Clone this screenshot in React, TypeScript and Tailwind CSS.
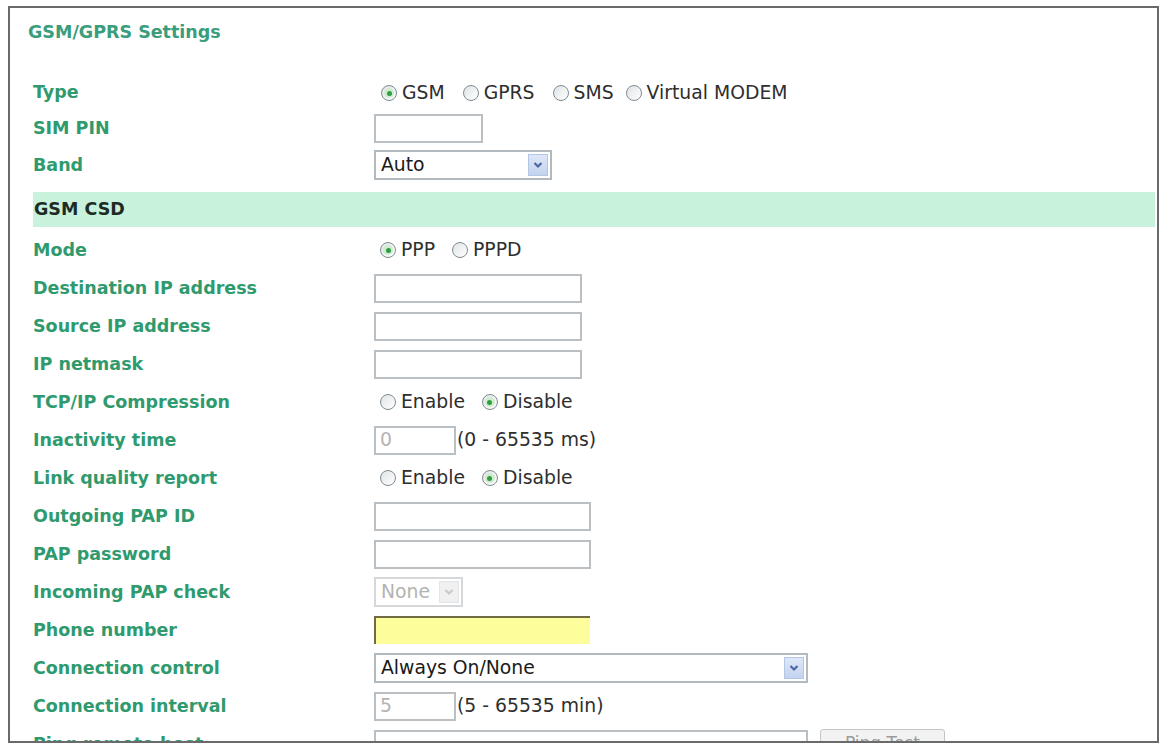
import React from 'react';

const Radio = ({ checked = false }: { checked?: boolean }) => (
  <span className="inline-flex items-center justify-center w-[16px] h-[16px] rounded-full border border-[#7f8b90] bg-linear-to-br from-[#dfe4e6] to-white shrink-0">
    {checked && (
      <span className="inline-flex items-center justify-center w-[10px] h-[10px] rounded-full bg-[#cfeccf]">
        <span className="w-[5px] h-[5px] rounded-full bg-[#2f9e3f]" />
      </span>
    )}
  </span>
);

const Opt = ({ label, checked, className = '' }: { label: string; checked?: boolean; className?: string }) => (
  <span className={'inline-flex items-center gap-[5px] ' + className}>
    <Radio checked={checked} />
    <span>{label}</span>
  </span>
);

const Input = ({ w, value, disabled }: { w: number; value?: string; disabled?: boolean }) => (
  <div
    className={
      'h-[29px] border-2 border-[#b9bfc3] bg-white flex items-center pl-[4px] ' +
      (disabled ? 'text-[#b4b4b4]' : '')
    }
    style={{ width: w }}
  >
    {value}
  </div>
);

const Chevron = ({ color }: { color: string }) => (
  <svg width="12" height="10" viewBox="0 0 12 10">
    <path d="M2.5 3 L6 6.5 L9.5 3" fill="none" stroke={color} strokeWidth="2.2" />
  </svg>
);

const Select = ({ w, text, disabled }: { w: number; text: string; disabled?: boolean }) => (
  <div
    className={
      'h-[30px] border-2 flex items-center justify-between pl-[5px] pr-[2px] bg-white ' +
      (disabled ? 'border-[#d6d9db] text-[#b3b3b3]' : 'border-[#b3babf] text-[#1a1a1a]')
    }
    style={{ width: w }}
  >
    <span>{text}</span>
    <span
      className={
        'w-[20px] h-[22px] flex items-center justify-center border ' +
        (disabled ? 'bg-[#f0f0f0] border-[#e4e4e4]' : 'bg-linear-to-b from-[#dde7f7] to-[#c3d3ee] border-[#b4c6e6]')
      }
    >
      <Chevron color={disabled ? '#c8c8c8' : '#4a66a6'} />
    </span>
  </div>
);

const Row = ({ label, h = 38, children }: { label: string; h?: number; children?: React.ReactNode }) => (
  <div className="flex items-center" style={{ height: h }}>
    <div className="w-[341px] shrink-0 font-bold text-[17.5px] text-[#2f9a6e]">{label}</div>
    <div className="flex items-center text-[18.8px] text-[#2e2e2e]">{children}</div>
  </div>
);

export default function App() {
  return (
    <div className="w-[1159px] h-[743px] bg-white overflow-hidden pl-[8px] pt-[6px] font-['DejaVu_Sans',Verdana,sans-serif]">
      <div className="w-[1151px] h-[737px] border-2 border-[#6a6a6a] overflow-hidden">
        <div className="h-[66px] pl-[18px] pt-[12px] leading-[24px] text-[17.5px] font-bold text-[#3a9d7b]">
          GSM/GPRS Settings
        </div>
        <div className="pl-[23px] pr-[2px]">
          <Row label="Type" h={36}>
            <Opt label="GSM" checked className="ml-[7px] mt-[2px]" />
            <Opt label="GPRS" className="ml-[18px] mt-[2px]" />
            <Opt label="SMS" className="ml-[18px] mt-[2px]" />
            <Opt label="Virtual MODEM" className="ml-[12px] mt-[2px]" />
          </Row>
          <Row label="SIM PIN" h={36}>
            <Input w={109} />
          </Row>
          <Row label="Band">
            <Select w={178} text="Auto" />
          </Row>
          <div className="mt-[8px] h-[35px] bg-[#c9f2dc] flex items-center pl-[1px] font-bold text-[17.5px] text-[#1d2b25]">
            GSM CSD
          </div>
          <div className="h-[4px]" />
          <Row label="Mode">
            <Opt label="PPP" checked className="ml-[6px]" />
            <Opt label="PPPD" className="ml-[17px]" />
          </Row>
          <Row label="Destination IP address">
            <Input w={208} />
          </Row>
          <Row label="Source IP address">
            <Input w={208} />
          </Row>
          <Row label="IP netmask">
            <Input w={208} />
          </Row>
          <Row label="TCP/IP Compression">
            <Opt label="Enable" className="ml-[6px]" />
            <Opt label="Disable" checked className="ml-[17px]" />
          </Row>
          <Row label="Inactivity time">
            <Input w={82} value="0" disabled />
            <span className="ml-[1px]">(0 - 65535 ms)</span>
          </Row>
          <Row label="Link quality report">
            <Opt label="Enable" className="ml-[6px]" />
            <Opt label="Disable" checked className="ml-[17px]" />
          </Row>
          <Row label="Outgoing PAP ID">
            <Input w={217} />
          </Row>
          <Row label="PAP password">
            <Input w={217} />
          </Row>
          <Row label="Incoming PAP check">
            <Select w={89} text="None" disabled />
          </Row>
          <Row label="Phone number">
            <div className="w-[216px] h-[28px] bg-[#fdfd9c] border-t-2 border-l-2 border-[#6f6c45]" />
          </Row>
          <Row label="Connection control">
            <Select w={434} text="Always On/None" />
          </Row>
          <Row label="Connection interval">
            <Input w={82} value="5" disabled />
            <span className="ml-[1px]">(5 - 65535 min)</span>
          </Row>
          <Row label="Ping remote host">
            <Input w={434} />
            <button className="ml-[12px] w-[125px] h-[30px] rounded-[3px] border border-[#c2c6c9] bg-[#f2f2f2] text-[#9a9a9a] text-[17px]">
              Ping Test
            </button>
          </Row>
        </div>
      </div>
    </div>
  );
}
